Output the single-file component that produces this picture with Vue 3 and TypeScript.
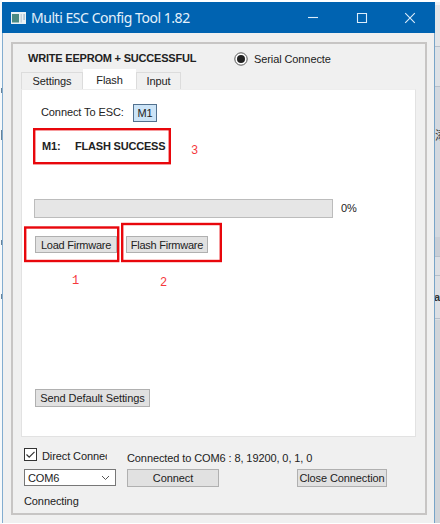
<script setup lang="ts">
import { ref } from 'vue'

const tabs = ['Settings', 'Flash', 'Input']
const activeTab = ref('Flash')
const direct = ref(true)
const progress = ref(0)
</script>

<template>
  <div class="desktop">
    <div class="behind-left"><i class="speck s1"></i><i class="speck s2"></i><i class="speck s3"></i><i class="speck s4"></i></div>
    <div class="behind-right">
      <span class="peek p1">添</span>
      <span class="peek p2">a</span>
      <i class="rule r1"></i><i class="rule r2"></i><i class="rule r3"></i><i class="rule r4"></i><i class="rule r5"></i>
    </div>
    <section class="window">
      <header class="titlebar">
        <svg class="app-icon" width="15" height="12" viewBox="0 0 15 12">
          <rect width="15" height="12" fill="#e9f1f5" />
          <rect x="1" y="2" width="7" height="8.500" fill="#4b8a83" />
          <rect x="9.500" y="2" width="1.500" height="8.500" fill="#c6d3dc" />
          <rect x="12.500" y="2" width="1.200" height="6" fill="#9fb8cb" />
        </svg>
        <h1 class="title">Multi ESC Config Tool 1.82</h1>
        <div class="controls">
          <svg width="12" height="12" viewBox="0 0 12 12"><path d="M1 5.500H11" /></svg>
          <svg width="12" height="12" viewBox="0 0 12 12"><path d="M1.500 1.500H10.500V10.500H1.500Z" /></svg>
          <svg width="12" height="12" viewBox="0 0 12 12"><path d="M1.200 1.200L10.800 10.800M10.800 1.200L1.200 10.800" /></svg>
        </div>
      </header>
      <main class="frame">
        <div class="status">
          <strong class="write">WRITE EEPROM + SUCCESSFUL</strong>
          <svg class="radio" width="14" height="14" viewBox="0 0 14 14">
            <circle cx="7" cy="7" r="6.200" fill="#fff" stroke="#555" />
            <circle cx="7" cy="7" r="4" fill="#222" />
          </svg>
          <span class="serial">Serial Connecte</span>
        </div>
        <nav class="tabs">
          <button v-for="t in tabs" :key="t" class="tab" :class="[t.toLowerCase(), { active: t === activeTab }]" @click="activeTab = t">{{ t }}</button>
        </nav>
        <div class="panel">
          <div class="esc"><span class="esc-label">Connect To ESC:</span><button class="m1">M1</button></div>
          <div class="result"><span class="motor">M1:</span><span class="outcome">FLASH SUCCESS</span></div>
          <div class="progress-row">
            <div class="track"><div class="fill" :style="{ width: progress + '%' }"></div></div>
            <span class="percent">{{ progress }}%</span>
          </div>
          <div class="firmware">
            <button class="btn load"><span>Load Firmware</span></button>
            <button class="btn flashfw"><span>Flash Firmware</span></button>
          </div>
          <button class="btn defaults"><span>Send Default Settings</span></button>
          <svg class="marks" width="210" height="190" viewBox="0 0 210 190">
            <rect x="12.200" y="39.200" width="135.600" height="34" />
            <rect x="3.200" y="137.500" width="93" height="33.500" />
            <rect x="100.200" y="134" width="98.600" height="37" />
          </svg>
          <span class="num n1">1</span>
          <span class="num n2">2</span>
          <span class="num n3">3</span>
        </div>
        <footer class="footer">
          <div class="line">
            <button class="check" @click="direct = !direct">
              <svg width="13" height="13" viewBox="0 0 13 13">
                <rect x=".5" y=".5" width="12" height="12" fill="#fff" stroke="#333" />
                <path v-if="direct" d="M2.500 6.500L5.200 9.200L10.500 3.800" fill="none" stroke="#333" stroke-width="1.200" />
              </svg>
            </button>
            <span class="direct">Direct Connec</span>
            <span class="connected">Connected to COM6 : 8, 19200, 0, 1, 0</span>
          </div>
          <div class="line ports">
            <div class="combo">
              <span class="com">COM6</span>
              <svg width="9" height="6" viewBox="0 0 9 6"><path d="M1 1L4.500 4.500L8 1" fill="none" stroke="#555" /></svg>
            </div>
            <button class="btn connect"><span>Connect</span></button>
            <button class="btn close"><span>Close Connection</span></button>
          </div>
          <div class="connecting">Connecting</div>
        </footer>
      </main>
    </section>
  </div>
</template>

<style>
body {
  background: #fff;
  overflow: hidden;
}
</style>

<style scoped>
* {
  box-sizing: border-box;
}
.desktop {
  position: relative;
  display: flex;
  width: 440px;
  height: 524px;
  padding: 2px 0 1px 2px;
  background: #fff;
  overflow: hidden;
  font: 11px/14px "Liberation Sans", Arial, sans-serif;
  letter-spacing: -0.1px;
  color: #222;
}
button {
  font: inherit;
  letter-spacing: inherit;
  color: inherit;
  padding: 0;
  margin: 0;
}
span, strong, .tab, .title {
  white-space: nowrap;
}
.behind-left {
  position: absolute;
  left: 0;
  top: 0;
  width: 2px;
  height: 524px;
  background: #f6f9fb;
}
.speck {
  position: absolute;
  left: 1px;
  width: 1px;
  height: 5px;
  background: #68839a;
}
.s1 { top: 88px; }
.s2 { top: 130px; height: 10px; }
.s3 { top: 240px; }
.s4 { top: 294px; }
.behind-right {
  position: absolute;
  left: 434px;
  top: 2px;
  width: 6px;
  height: 521px;
  background: linear-gradient(#f1f2f4 0 3px, #e3e5e8 3px 44px, #dde1e6 44px 84px, #d3d8df 84px 235px, #c9ced6 235px 255px, #dcdfe4 255px 318px, #d0d4d9 318px);
  overflow: hidden;
}
.peek {
  position: absolute;
  left: 1px;
  color: #333;
}
.p1 { top: 126px; font: 12px/14px "Noto Sans CJK SC", sans-serif; }
.p2 { top: 288px; font-weight: bold; left: 0; }
.rule {
  position: absolute;
  left: 0;
  width: 6px;
  height: 1px;
  background: #b7c0cb;
}
.r1 { top: 44px; }
.r2 { top: 84px; }
.r3 { top: 254px; }
.r4 { top: 273px; }
.r5 { top: 316px; }
.window {
  position: relative;
  display: flex;
  flex-direction: column;
  width: 433px;
  height: 521px;
  background: #f0f0f0;
  border-left: 1px solid #83add0;
  border-right: 1px solid #78a4c8;
}
.titlebar {
  display: flex;
  align-items: center;
  height: 31px;
  margin: 0 -1px;
  padding-left: 9px;
  background: #0063b1;
}
.title {
  width: 170px;
  margin: 0 0 0 5px;
  font: 14px/20px "Noto Sans", "Open Sans", sans-serif;
  letter-spacing: -0.46px;
  color: #e4f1fb;
}
.controls {
  display: flex;
  gap: 36.500px;
  margin-left: 106px;
}
.controls svg {
  fill: none;
  stroke: #dcedfb;
  stroke-width: 1.100;
}
.frame {
  display: flex;
  flex-direction: column;
  width: 416px;
  height: 473px;
  margin: 9px 0 0 8px;
  padding: 0 9px;
  border: 2px solid #c7c5c4;
}
.status {
  display: flex;
  align-items: center;
  height: 25px;
  padding-left: 6px;
  padding-top: 4px;
}
.write {
  width: 206px;
  letter-spacing: -0.2px;
  margin-top: -1px;
}
.radio {
  flex: none;
}
.serial {
  margin-left: 6px;
}
.tabs {
  display: flex;
  align-items: flex-end;
  height: 20px;
  position: relative;
  margin-left: -1px;
}
.tab {
  height: 17px;
  border: 1px solid #dcdcdc;
  border-bottom: 0;
  background: #f0f0f0;
  line-height: 16px;
}
.tab.settings { width: 62px; }
.tab.flash { width: 53px; }
.tab.input { width: 45px; }
.tab.active {
  height: 20px;
  background: #fff;
  border-color: #fff;
  line-height: 18px;
}
.panel {
  position: relative;
  width: 395px;
  height: 348px;
  margin-left: -1px;
  border: 1px solid #e2e2e2;
  border-top-color: #eee;
  background: #fff;
  flex: none;
}
.esc {
  display: flex;
  height: 18px;
  margin: 14px 0 0 19px;
}
.esc-label {
  width: 92px;
  line-height: 17px;
}
.m1 {
  width: 24px;
  height: 18px;
  border: 1px solid #52718f;
  background: #cce4f7;
  line-height: 17px;
}
.result {
  display: flex;
  margin: 17px 0 0 20px;
  font-weight: bold;
  letter-spacing: -0.2px;
}
.motor {
  width: 33px;
}
.progress-row {
  display: flex;
  align-items: center;
  height: 20px;
  margin: 45px 0 0 12px;
}
.track {
  width: 299px;
  height: 19px;
  background: #e6e6e6;
  border: 1px solid #bcbcbc;
}
.fill {
  height: 100%;
  background: #06b025;
}
.percent {
  margin-left: 8px;
}
.btn {
  display: flex;
  justify-content: center;
  align-items: center;
  height: 18px;
  border: 1px solid #b0b0b0;
  background: #e1e1e1;
  line-height: 14px;
}
.firmware {
  display: flex;
  gap: 9px;
  margin: 18px 0 0 13px;
}
.load, .flashfw {
  width: 82px;
  height: 17px;
  letter-spacing: -0.25px;
}
.defaults {
  width: 115px;
  margin: 136px 0 0 13px;
}
.marks {
  position: absolute;
  left: 0;
  top: 0;
  fill: none;
  stroke: #e8070c;
  stroke-width: 2.400;
  pointer-events: none;
}
.num {
  position: absolute;
  font: 12px/14px "Liberation Mono", monospace;
  color: #f5383c;
}
.n1 { left: 50px; top: 184px; }
.n2 { left: 138px; top: 186px; }
.n3 { left: 169px; top: 54px; }
.footer {
  margin-left: 2px;
}
.line {
  display: flex;
}
.footer > .line:first-child {
  margin-top: 11px;
}
.check {
  width: 13px;
  height: 13px;
  border: 0;
  background: none;
  display: flex;
}
.direct {
  width: 65px;
  margin-left: 5px;
  padding-top: 1px;
  overflow: hidden;
}
.connected {
  margin: 3px 0 0 20px;
}
.ports {
  margin-top: 4px;
}
.combo {
  display: flex;
  align-items: center;
  justify-content: space-between;
  width: 92px;
  height: 17px;
  padding: 0 5px 0 3px;
  background: #fff;
  border: 1px solid #777;
}
.connect {
  width: 92px;
  margin-left: 11px;
}
.close {
  width: 90px;
  margin-left: 78px;
}
.connecting {
  margin-top: 7px;
}
</style>
